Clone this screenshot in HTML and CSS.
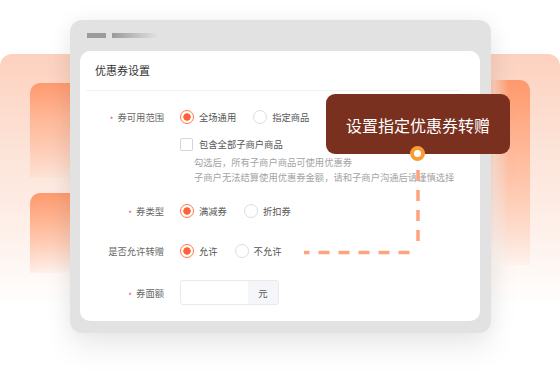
FILE: index.html
```html
<!DOCTYPE html>
<html lang="zh-CN">
<head>
    <meta charset="UTF-8">
    <meta name="viewport" content="width=device-width, initial-scale=1.0">
    <title>优惠券设置</title>
    <link rel="stylesheet" href="styles.css">
</head>
<body>
    <div class="stage">
        <!-- Hintergrund-Kacheln -->
        <div class="deco deco-left"></div>
        <div class="deco deco-left-top"></div>
        <div class="deco deco-left-bottom"></div>
        <div class="deco deco-right"></div>
        <div class="deco deco-right-inner"></div>

        <div class="window">
            <div class="window-bar">
                <span class="bar-dot"></span>
                <span class="bar-line"></span>
            </div>

            <div class="card">
                <div class="card-header">优惠券设置</div>

                <div class="form">
                    <div class="form-row">
                        <div class="form-label is-required">券可用范围</div>
                        <div class="form-field">
                            <div class="radio-group">
                                <span class="radio is-checked">全场通用</span>
                                <span class="radio">指定商品</span>
                            </div>
                            <div class="checkbox">包含全部子商户商品</div>
                            <p class="hint">
                                勾选后，所有子商户商品可使用优惠券<br>
                                子商户无法结算使用优惠券金额，请和子商户沟通后请谨慎选择
                            </p>
                        </div>
                    </div>

                    <div class="form-row row-type">
                        <div class="form-label is-required">券类型</div>
                        <div class="form-field">
                            <div class="radio-group">
                                <span class="radio is-checked">满减券</span>
                                <span class="radio">折扣券</span>
                            </div>
                        </div>
                    </div>

                    <div class="form-row row-gift">
                        <div class="form-label">是否允许转赠</div>
                        <div class="form-field">
                            <div class="radio-group">
                                <span class="radio is-checked">允许</span>
                                <span class="radio">不允许</span>
                            </div>
                        </div>
                    </div>

                    <div class="form-row row-amount">
                        <div class="form-label is-required">券面额</div>
                        <div class="form-field">
                            <div class="input">
                                <span class="input-box"></span>
                                <span class="input-suffix">元</span>
                            </div>
                        </div>
                    </div>
                </div>
            </div>
        </div>

        <div class="tip">设置指定优惠券转赠</div>
        <span class="tip-dot"></span>
        <svg class="tip-line" width="560" height="373" viewBox="0 0 560 373">
            <path d="M418 170 V244" />
            <path d="M409.5 252.5 H304" />
        </svg>
    </div>
</body>
</html>
```

FILE: styles.css
```css
:root {
    --primary-color: #ff6234;
    --tip-color: #7a301f;
    --label-color: #666666;
    --text-color: #555555;
    --hint-color: #a3a3a3;
    --line-color: #ffa27d;
}

* {
    margin: 0;
    padding: 0;
    box-sizing: border-box;
}

body {
    font-family: 'Noto Sans CJK SC', 'Noto Sans', sans-serif;
    background-color: #FFFFFF;
    width: 560px;
    height: 373px;
    overflow: hidden;
}

.stage {
    position: relative;
    width: 560px;
    height: 373px;
    padding: 20px 0 0 70px;
}

/* Hintergrund */
.deco {
    position: absolute;
}

.deco-left {
    left: 0;
    top: 54px;
    width: 90px;
    height: 250px;
    border-radius: 12px 0 0 0;
    background: linear-gradient(180deg, #fdd1be 0%, #fde4d9 40%, #fef2ec 75%, rgba(255, 255, 255, 0) 100%);
}

.deco-left-top,
.deco-left-bottom {
    left: 30px;
    width: 60px;
    border-radius: 10px 0 0 0;
    background: linear-gradient(172deg, #ff986b 0%, #ffbb9c 40%, rgba(255, 225, 210, 0) 100%);
}

.deco-left-top {
    top: 83px;
    height: 95px;
}

.deco-left-bottom {
    top: 193px;
    height: 80px;
}

.deco-right {
    left: 470px;
    top: 54px;
    width: 90px;
    height: 250px;
    border-radius: 0 12px 0 0;
    background: linear-gradient(180deg, #fdd1be 0%, #fde4d9 40%, #fef2ec 75%, rgba(255, 255, 255, 0) 100%);
}

.deco-right-inner {
    left: 470px;
    top: 80px;
    width: 60px;
    height: 185px;
    border-radius: 0 10px 0 0;
    background:
        linear-gradient(90deg, rgba(255, 255, 255, 0) 0%, rgba(255, 255, 255, 0.5) 40%, rgba(255, 255, 255, 0) 65%),
        linear-gradient(188deg, #ff986b 0%, #ffbb9c 40%, rgba(255, 225, 210, 0) 100%);
}

/* Fenster */
.window {
    position: relative;
    width: 421px;
    height: 313px;
    padding: 0 11px 12px 10px;
    background-color: #e2e2e2;
    border-radius: 12px;
    box-shadow: 0 16px 30px rgba(0, 0, 0, 0.07), 0 0 22px rgba(0, 0, 0, 0.05);
    display: flex;
    flex-direction: column;
}

.window-bar {
    height: 31px;
    padding: 13px 0 0 7px;
    display: flex;
    gap: 6px;
}

.bar-dot,
.bar-line {
    height: 5px;
}

.bar-dot {
    width: 19px;
    background-color: #9b9b9b;
}

.bar-line {
    width: 46px;
    background: linear-gradient(90deg, #9b9b9b, rgba(155, 155, 155, 0));
}

.card {
    flex: 1;
    background-color: #FFFFFF;
    border-radius: 10px;
}

.card-header {
    margin: 0 19px 0 6px;
    padding-left: 9px;
    height: 40px;
    line-height: 39px;
    font-size: 11px;
    color: #333333;
    border-bottom: 1px solid #f2f2f2;
}

/* Formular */
.form {
    padding-top: 18px;
    font-size: 9.3px;
}

.form-row {
    display: flex;
}

.row-type {
    margin-top: 18px;
}

.row-gift {
    margin-top: 24px;
}

.row-amount {
    margin-top: 21px;
    align-items: center;
}

.form-label {
    width: 84px;
    flex-shrink: 0;
    text-align: right;
    line-height: 16px;
    color: var(--label-color);
}

.is-required::before {
    content: '*';
    display: inline-block;
    margin-right: 4px;
    font-size: 8px;
    line-height: 1;
    color: #f2475b;
    transform: translateY(2px);
}

.form-field {
    margin-left: 16px;
}

.radio-group {
    display: flex;
    gap: 17px;
    height: 16px;
}

.radio,
.checkbox {
    display: flex;
    align-items: center;
    line-height: 16px;
    color: var(--text-color);
}

.radio {
    gap: 5px;
}

.radio::before {
    content: '';
    width: 12px;
    height: 12px;
    border: 1px solid #dddddd;
    border-radius: 50%;
}

.radio.is-checked::before {
    border-color: #ff7446;
    background: radial-gradient(circle, var(--primary-color) 3.4px, #FFFFFF 4px);
}

.checkbox {
    margin-top: 11px;
    gap: 6px;
}

.checkbox::before {
    content: '';
    width: 11px;
    height: 11px;
    border: 1px solid #d6d6d6;
    border-radius: 2px;
}

.hint {
    margin-top: 3px;
    padding-left: 14px;
    line-height: 15px;
    color: var(--hint-color);
}

.input {
    display: flex;
    width: 99px;
    height: 25px;
    border: 1px solid #e9e9e9;
    border-radius: 3px;
    overflow: hidden;
}

.input-box {
    flex: 1;
}

.input-suffix {
    width: 30px;
    display: flex;
    align-items: center;
    justify-content: center;
    background-color: #f5f6f9;
    color: var(--text-color);
}

/* Hinweis-Blase */
.tip {
    position: absolute;
    left: 326px;
    top: 94px;
    width: 184px;
    height: 60px;
    padding-top: 1px;
    border-radius: 9px;
    background-color: var(--tip-color);
    color: #FFFFFF;
    font-size: 16px;
    display: flex;
    align-items: center;
    justify-content: center;
}

.tip-dot {
    position: absolute;
    left: 410px;
    top: 146px;
    width: 15px;
    height: 15px;
    border: 4px solid #f89d33;
    border-radius: 50%;
    background-color: #FFFFFF;
}

.tip-line {
    position: absolute;
    left: 0;
    top: 0;
    fill: none;
    stroke: var(--line-color);
    stroke-width: 3.5;
    stroke-dasharray: 11 9;
}
```
